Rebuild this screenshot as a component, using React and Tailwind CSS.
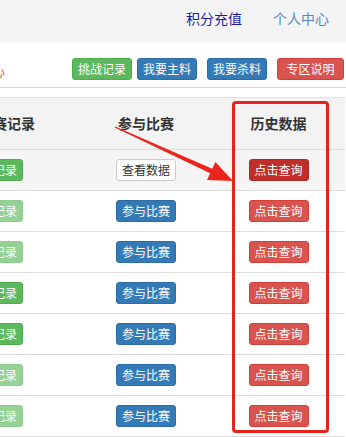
import React from "react";

const rows = [
  { left: "green", mid: "view", hot: true },
  { left: "light", mid: "join" },
  { left: "light", mid: "join" },
  { left: "green", mid: "join" },
  { left: "green", mid: "join" },
  { left: "light", mid: "join" },
  { left: "light", mid: "join" },
];

const btn =
  "inline-flex items-center justify-center h-[22px] rounded-[3px] border text-[12px] leading-[18px] whitespace-nowrap";

const App = () => {
  return (
    <div className="relative w-[346px] h-[437px] overflow-hidden bg-white font-['Noto_Sans_CJK_SC','Microsoft_YaHei',sans-serif] text-[#333]">
      {/* top nav */}
      <div className="h-[43px] bg-[#f4f4f4] flex justify-end gap-[31px] pr-[17px] pt-[8px] text-[14px] leading-[20px]">
        <span className="text-[#1c1ca3]">积分充值</span>
        <span className="text-[#5a87c2]">个人中心</span>
      </div>

      {/* toolbar */}
      <div className="h-[45px] border-b border-[#d6d6d6] flex items-start pt-[15px] pr-[2px]">
        <span className="ml-[-9px] mt-[2px] text-[14px] leading-[20px] text-[#e05a5a]">心</span>
        <div className="ml-auto flex">
          <span className={`${btn} w-[60px] bg-[#5cb85c] border-[#4cae4c] text-white`}>挑战记录</span>
          <span className={`${btn} w-[60px] ml-[5px] bg-[#337ab7] border-[#2e6da4] text-white`}>我要主料</span>
          <span className={`${btn} w-[60px] ml-[10px] bg-[#337ab7] border-[#2e6da4] text-white`}>我要杀料</span>
          <span className={`${btn} w-[67px] ml-[10px] bg-[#d9534f] border-[#d43f3a] text-white`}>专区说明</span>
        </div>
      </div>

      {/* table */}
      <div className="mt-[9px] w-[345px] border-t border-[#e3e3e3]">
        <div className="h-[52px] grid grid-cols-[80px_132px_133px] items-center bg-[#f3f3f3] border-b border-[#dddddd] text-[14px] font-bold">
          <span className="ml-[-21px] whitespace-nowrap">比赛记录</span>
          <span className="text-center">参与比赛</span>
          <span className="text-center">历史数据</span>
        </div>
        {rows.map((r, i) => (
          <div
            key={i}
            className={`h-[41px] grid grid-cols-[80px_132px_133px] items-center border-b border-[#dddddd] ${
              r.hot ? "bg-[#f5f5f5]" : "bg-white"
            }`}
          >
            <div className="flex">
              <span
                className={`${btn} w-[60px] ml-[-37px] text-white ${
                  r.left === "green"
                    ? "bg-[#5cb85c] border-[#4cae4c]"
                    : "bg-[#95d195] border-[#8ccd8c]"
                }`}
              >
                查看记录
              </span>
            </div>
            <div className="flex justify-center">
              {r.mid === "view" ? (
                <span className={`${btn} w-[60px] bg-white border-[#cccccc] text-[#333]`}>查看数据</span>
              ) : (
                <span className={`${btn} w-[60px] bg-[#337ab7] border-[#2e6da4] text-white`}>参与比赛</span>
              )}
            </div>
            <div className="flex justify-center">
              <span
                className={`${btn} w-[60px] text-white ${
                  r.hot ? "bg-[#c12e2a] border-[#ac2925]" : "bg-[#d9534f] border-[#d43f3a]"
                }`}
              >
                点击查询
              </span>
            </div>
          </div>
        ))}
      </div>

      {/* annotation box */}
      <div className="absolute left-[232px] top-[101px] w-[97px] h-[332px] border-[3px] border-[#e8231b] rounded-[4px] pointer-events-none" />

      {/* annotation arrow */}
      <svg className="absolute left-0 top-0 pointer-events-none" width="346" height="437" viewBox="0 0 346 437">
        <polygon
          fill="#e8261c"
          points="115.3,126.4 212.2,168.7 215.4,161.9 233,181 207,180.1 210.2,173.3 114.7,127.6"
        />
      </svg>
    </div>
  );
};

export default App;
